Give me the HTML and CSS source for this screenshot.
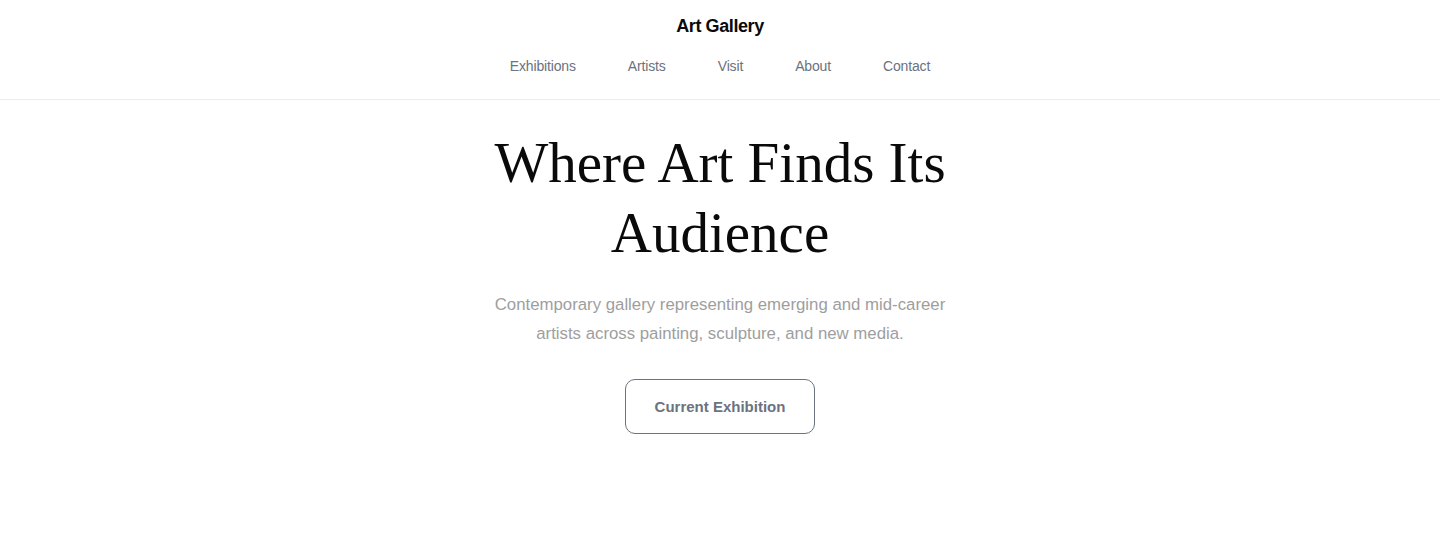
FILE: index.html
```html
<!DOCTYPE html>
<html lang="en">
<head>
<meta charset="utf-8">
<title>Art Gallery</title>
<link rel="stylesheet" href="styles.css">
</head>
<body>
<header class="site-header">
  <div class="brand">Art Gallery</div>
  <nav class="nav">
    <a href="#">Exhibitions</a>
    <a href="#">Artists</a>
    <a href="#">Visit</a>
    <a href="#">About</a>
    <a href="#">Contact</a>
  </nav>
</header>
<main class="hero">
  <h1 class="hero-title">Where Art Finds Its<br>Audience</h1>
  <p class="hero-text">Contemporary gallery representing emerging and mid-career artists across painting, sculpture, and new media.</p>
  <a class="btn" href="#">Current Exhibition</a>
</main>
</body>
</html>
```
FILE: styles.css
```css
* { box-sizing: border-box; }
html, body { margin: 0; padding: 0; background: #fff; }
body { font-family: "Liberation Sans", Arial, sans-serif; color: #111; }

.site-header {
  display: flex;
  flex-direction: column;
  align-items: center;
  padding: 14px 0 23px;
  border-bottom: 1px solid #ececec;
}
.brand {
  font-size: 18px;
  font-weight: 700;
  line-height: 24px;
  letter-spacing: -0.4px;
  color: #0a0a0a;
}
.nav {
  display: flex;
  gap: 52px;
  margin-top: 18px;
}
.nav a {
  font-size: 14px;
  line-height: 20px;
  letter-spacing: -0.15px;
  color: #6b7280;
  text-decoration: none;
}

.hero {
  display: flex;
  flex-direction: column;
  align-items: center;
  text-align: center;
  padding-top: 28px;
}
.hero-title {
  margin: 0;
  font-family: "Liberation Serif", "Times New Roman", serif;
  font-weight: 400;
  font-size: 57px;
  line-height: 70px;
  color: #0a0a0a;
}
.hero-text {
  margin: 22px 0 0;
  max-width: 470px;
  font-size: 16.8px;
  line-height: 29px;
  color: #9e9e9e;
}
.btn {
  margin-top: 31px;
  display: inline-block;
  padding: 16px 29px;
  border: 1px solid #6b7280;
  border-radius: 10px;
  font-size: 15px;
  font-weight: 700;
  line-height: 21px;
  color: #6b7280;
  text-decoration: none;
}
```
